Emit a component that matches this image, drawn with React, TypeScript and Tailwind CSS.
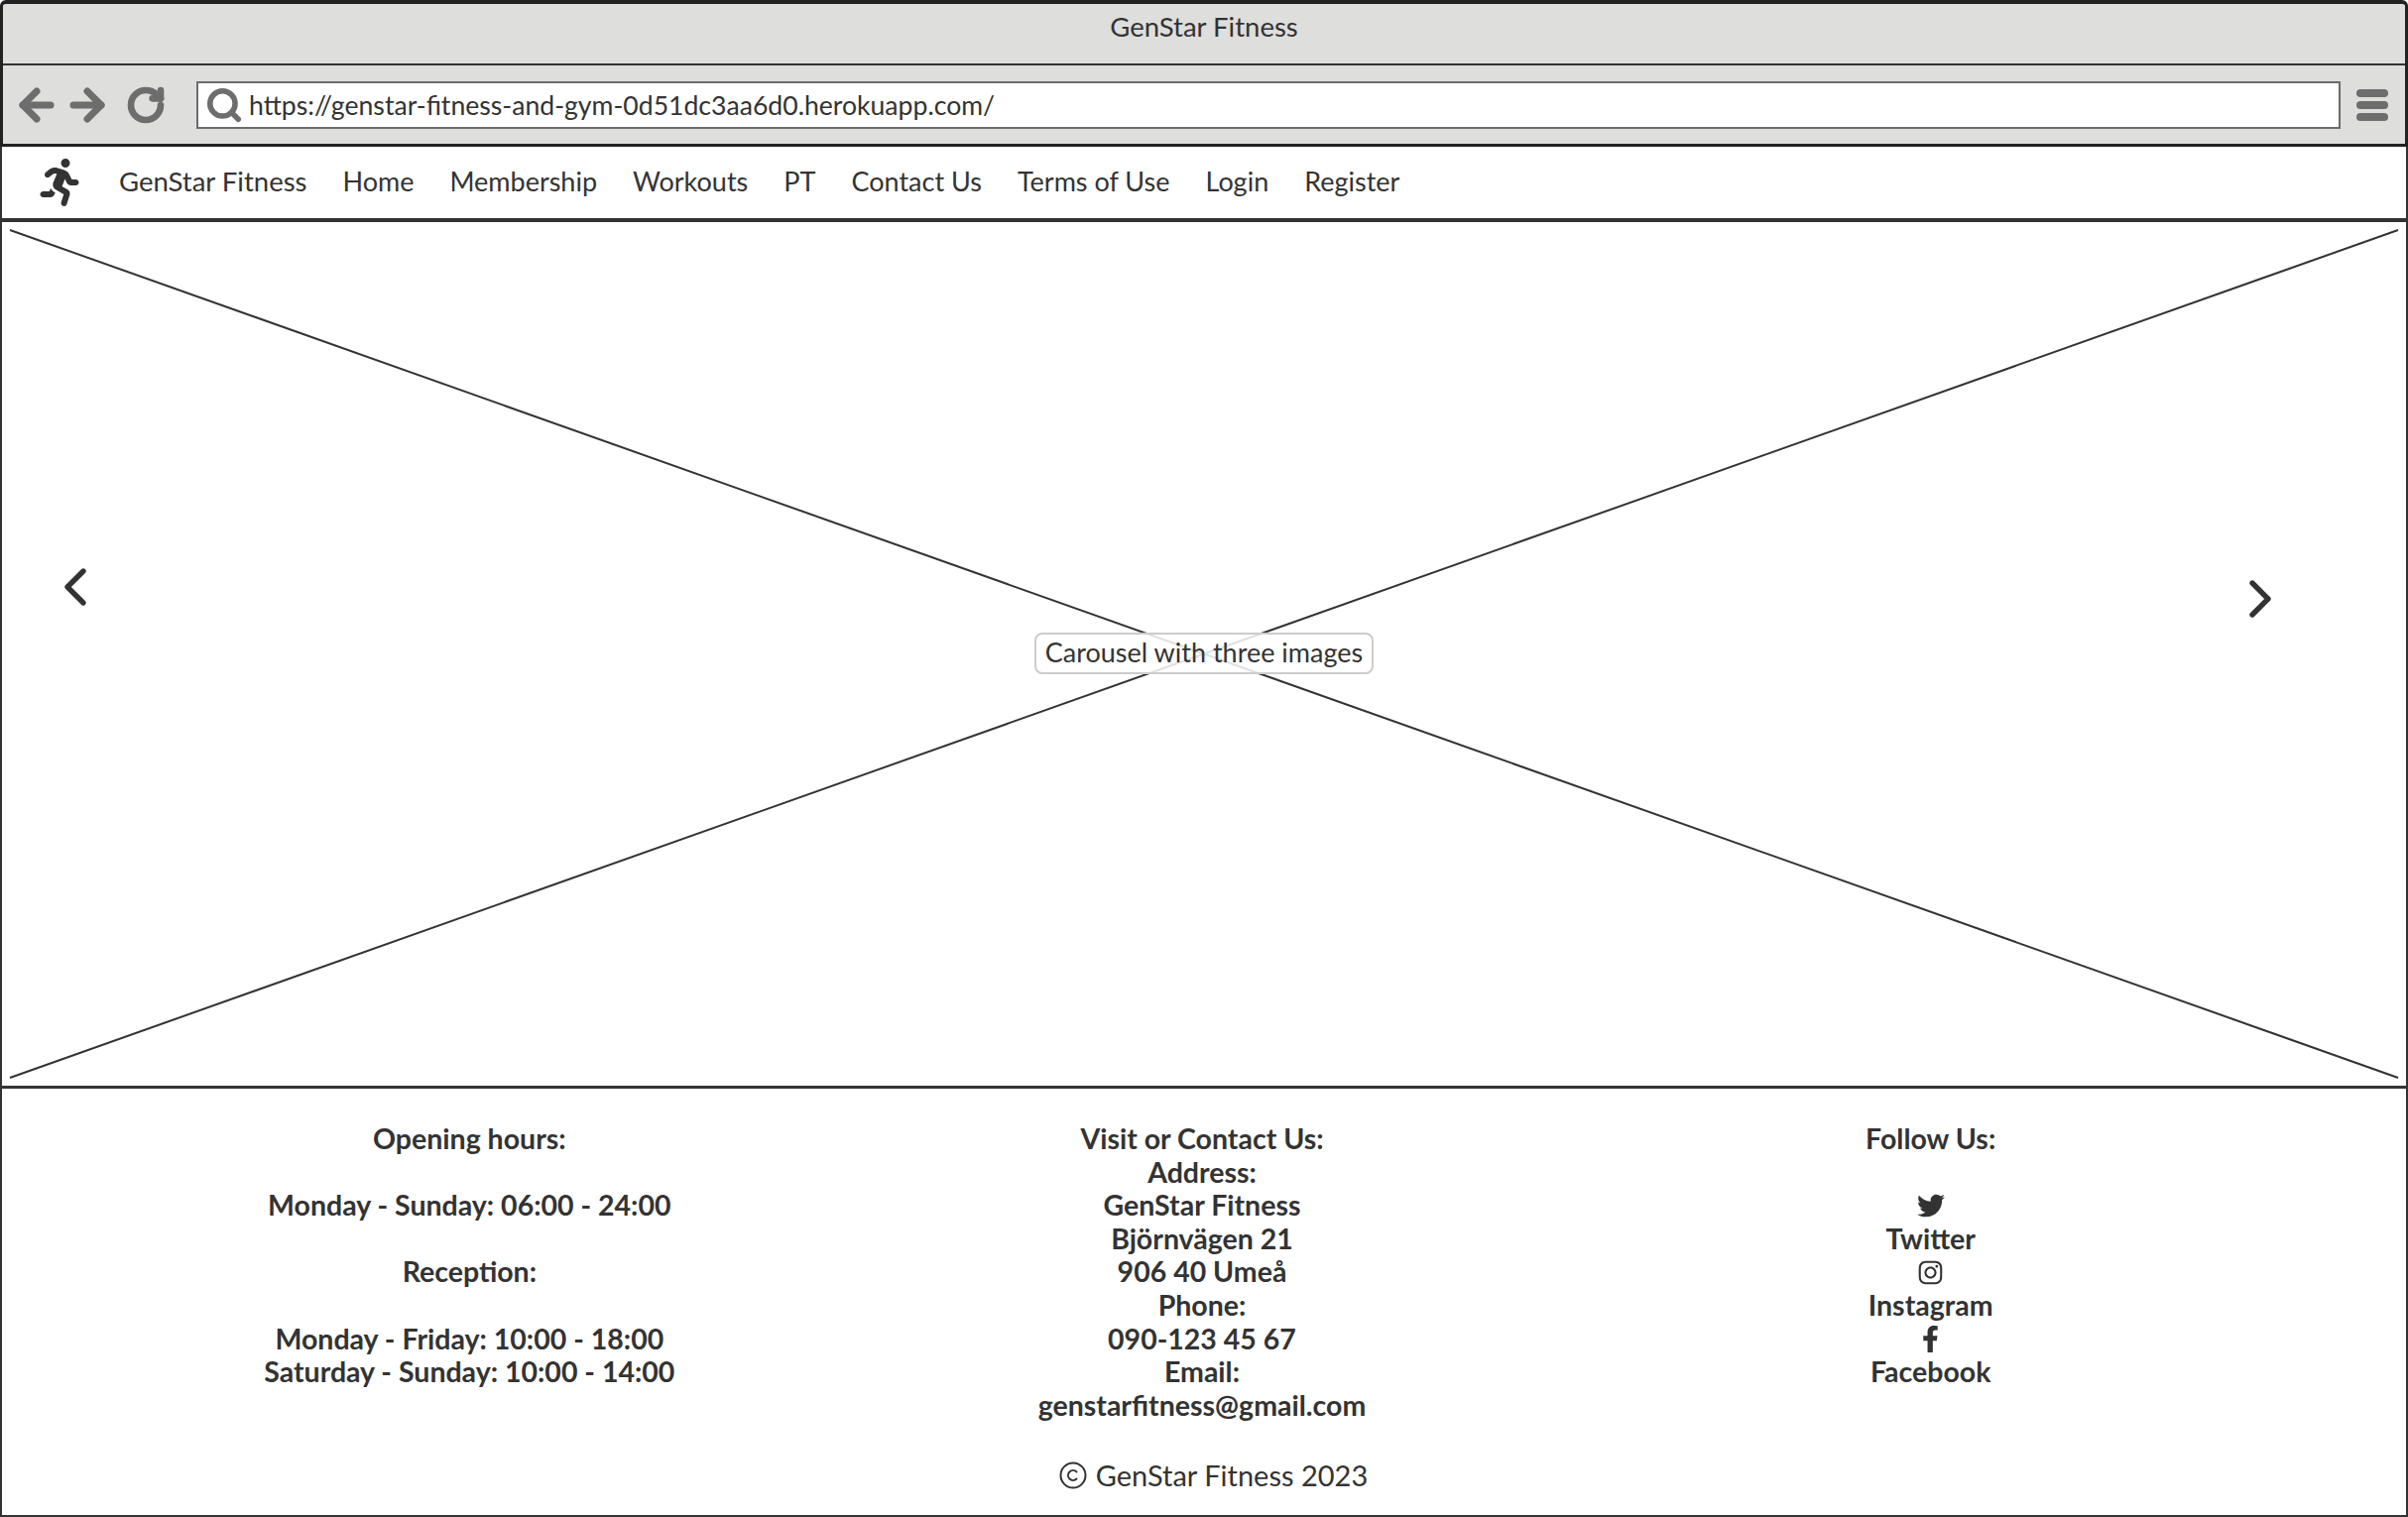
import { ArrowLeft, ArrowRight, ChevronLeft, ChevronRight, Copyright, RotateCw, Search } from "lucide-react";
import { FaFacebookF, FaInstagram, FaRunning, FaTwitter } from "react-icons/fa";

const navLinks = ["Home", "Membership", "Workouts", "PT", "Contact Us", "Terms of Use", "Login", "Register"];

export default function App() {
  return (
    <div className="h-[1530px] w-[2428px] flex flex-col bg-white font-[Lato,sans-serif] text-[#333] overflow-hidden">
      {/* Browser chrome */}
      <div className="border-x-[3px] border-t-4 border-b-[3px] border-[#222] rounded-t-md bg-[#dededc]">
        <div className="h-[62px] border-b-2 border-[#333] text-center">
          <p className="pt-[4px] text-[27.5px] leading-[38px]">GenStar Fitness</p>
        </div>
        <div className="h-[79px] flex items-center pl-[10px] pr-[17px] pt-[1px] text-[#6d6d6d]">
          <ArrowLeft size={48} strokeWidth={3.5} />
          <ArrowRight size={48} strokeWidth={3.5} className="ml-[3px]" />
          <RotateCw size={40} strokeWidth={4} className="ml-[15px]" />
          <div className="ml-[31px] h-[48px] flex-1 flex items-center border-2 border-[#6b6b6b] bg-white pl-[7px]">
            <Search size={38} strokeWidth={3.5} />
            <span className="ml-[6px] pt-[2px] text-[26.6px] text-[#333]">https://genstar-fitness-and-gym-0d51dc3aa6d0.herokuapp.com/</span>
          </div>
          <div className="ml-[16px] w-[32px] flex flex-col gap-[4px]">
            <div className="h-[8px] rounded-full bg-[#6d6d6d]" />
            <div className="h-[8px] rounded-full bg-[#6d6d6d]" />
            <div className="h-[8px] rounded-full bg-[#6d6d6d]" />
          </div>
        </div>
      </div>

      <div className="flex-1 flex flex-col border-x-2 border-b-2 border-[#333]">
        {/* Navbar */}
        <nav className="h-[76px] flex items-center border-b-4 border-[#333] text-[27px]">
          <FaRunning size={48} className="ml-[34px] shrink-0" />
          <div className="ml-[36px] pb-[2px] flex items-center gap-[36px]">
            <span className="text-[27.5px]">GenStar Fitness</span>
            {navLinks.map((link) => (
              <span key={link}>{link}</span>
            ))}
          </div>
        </nav>

        {/* Carousel placeholder */}
        <div className="relative h-[874px] border-b-[3px] border-[#333]">
          <svg className="absolute inset-0 h-full w-full" viewBox="0 0 2424 871" preserveAspectRatio="none">
            <line x1="8" y1="8" x2="2416" y2="863" stroke="#333" strokeWidth="2" />
            <line x1="8" y1="863" x2="2416" y2="8" stroke="#333" strokeWidth="2" />
          </svg>
          <div className="absolute left-[1041px] top-[414px] h-[42px] w-[342px] flex items-center justify-center rounded-lg border-2 border-[#ccc] bg-white/85 pb-[2px] text-[27px]">
            Carousel with three images
          </div>
          <ChevronLeft size={64} strokeWidth={2} className="absolute left-[42px] top-[336px]" />
          <ChevronRight size={64} strokeWidth={2} className="absolute left-[2245px] top-[348px]" />
        </div>

        {/* Footer */}
        <footer className="flex-1 pt-[34px] text-center text-[28.5px] leading-[33.6px]">
          <div className="grid grid-cols-3 pl-[102px] pr-[106px] font-bold">
            <div>
              <p>Opening hours:</p>
              <p className="mt-[33.6px]">Monday - Sunday: 06:00 - 24:00</p>
              <p className="mt-[33.6px]">Reception:</p>
              <p className="mt-[33.6px]">Monday - Friday: 10:00 - 18:00</p>
              <p>Saturday - Sunday: 10:00 - 14:00</p>
            </div>
            <div>
              <p>Visit or Contact Us:</p>
              <p>Address:</p>
              <p>GenStar Fitness</p>
              <p>Björnvägen 21</p>
              <p>906 40 Umeå</p>
              <p>Phone:</p>
              <p>090-123 45 67</p>
              <p>Email:</p>
              <p>genstarfitness@gmail.com</p>
            </div>
            <div className="pr-[8px]">
              <p>Follow Us:</p>
              <div className="mt-[33.6px] h-[33.6px] flex items-center justify-center"><FaTwitter size={28} /></div>
              <p>Twitter</p>
              <div className="h-[33.6px] flex items-center justify-center"><FaInstagram size={27} /></div>
              <p>Instagram</p>
              <div className="h-[33.6px] flex items-center justify-center"><FaFacebookF size={27} /></div>
              <p>Facebook</p>
            </div>
          </div>
          <div className="mt-[37px] pl-[18px] flex items-center justify-center gap-[8px] text-[29px]">
            <Copyright size={30} strokeWidth={1.6} />
            <span>GenStar Fitness 2023</span>
          </div>
        </footer>
      </div>
    </div>
  );
}
